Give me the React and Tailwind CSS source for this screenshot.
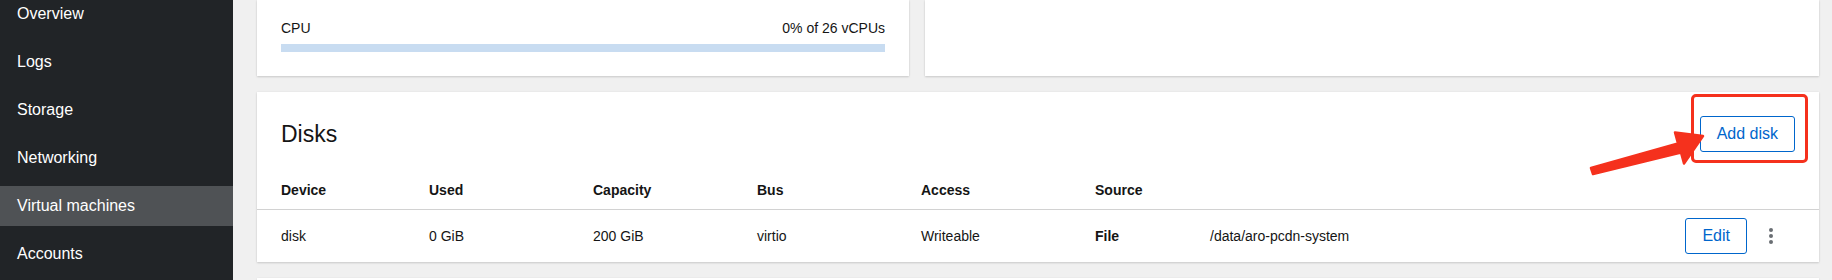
import React from "react";

const navItems = ["Overview", "Logs", "Storage", "Networking", "Virtual machines", "Accounts"];

const columns = [
  { label: "Device", w: "w-[148px]" },
  { label: "Used", w: "w-[164px]" },
  { label: "Capacity", w: "w-[164px]" },
  { label: "Bus", w: "w-[164px]" },
  { label: "Access", w: "w-[174px]" },
  { label: "Source", w: "w-[115px]" },
];

const disk = ["disk", "0 GiB", "200 GiB", "virtio", "Writeable"];

function Kebab() {
  return (
    <svg width="4" height="16" viewBox="0 0 4 16" fill="#6a6e73">
      <circle cx="2" cy="2" r="2" />
      <circle cx="2" cy="8" r="2" />
      <circle cx="2" cy="14" r="2" />
    </svg>
  );
}

export default function App() {
  return (
    <div className="relative flex h-[280px] w-[1832px] overflow-hidden font-['Liberation_Sans',Arial,sans-serif] text-[#151515]">
      {/* Sidebar */}
      <nav className="w-[233px] shrink-0 bg-[#212427]">
        <ul className="-mt-[6px] flex flex-col gap-2">
          {navItems.map((item) => (
            <li
              key={item}
              className={
                "flex h-10 items-center pl-[17px] text-base text-white " +
                (item === "Virtual machines" ? "bg-[#4f5255]" : "")
              }
            >
              {item}
            </li>
          ))}
        </ul>
      </nav>

      {/* Main */}
      <main className="flex flex-1 flex-col gap-4 bg-[#f0f0f0] pl-6 pr-[13px]">
        <div className="flex gap-4">
          <div className="w-[652px] bg-white px-6 pt-[18px] pb-6 shadow-[0_1px_2px_rgba(3,3,3,0.15),0_0_2px_rgba(3,3,3,0.06)]">
            <div className="flex justify-between text-sm leading-[21px]">
              <span>CPU</span>
              <span>0% of 26 vCPUs</span>
            </div>
            <div className="mt-[5px] h-2 bg-[#c8dcf1]" />
          </div>
          <div className="flex-1 bg-white shadow-[0_1px_2px_rgba(3,3,3,0.15),0_0_2px_rgba(3,3,3,0.06)]" />
        </div>

        {/* Disks card */}
        <div className="bg-white shadow-[0_1px_2px_rgba(3,3,3,0.15),0_0_2px_rgba(3,3,3,0.06)]">
          <div className="flex items-center justify-between px-6 pt-6">
            <h2 className="text-[23px] leading-none">Disks</h2>
            <div className="relative">
              <div className="pointer-events-none absolute -top-[22px] -left-[9px] -right-[13px] -bottom-[11px] rounded-[5px] border-[3px] border-[#f5311d]" />
              <button className="h-9 rounded-[3px] border border-[#0066cc] px-4 text-base text-[#0066cc]">
                Add disk
              </button>
            </div>
          </div>

          <div className="flex border-b border-[#d2d2d2] px-6 pt-[28px] pb-2 text-sm leading-[21px] font-bold">
            {columns.map((c) => (
              <div key={c.label} className={c.w}>{c.label}</div>
            ))}
          </div>

          <div className="flex h-[52px] items-center pl-6 pr-8 text-sm">
            {disk.map((v, i) => (
              <div key={i} className={columns[i].w}>{v}</div>
            ))}
            <div className={columns[5].w + " font-bold"}>File</div>
            <div className="flex-1">/data/aro-pcdn-system</div>
            <button className="h-9 rounded-[3px] border border-[#0066cc] px-4 text-base text-[#0066cc]">
              Edit
            </button>
            <button className="ml-2 flex h-9 w-8 items-center justify-center">
              <Kebab />
            </button>
          </div>
        </div>

        <div className="h-20 bg-white shadow-[0_1px_2px_rgba(3,3,3,0.15),0_0_2px_rgba(3,3,3,0.06)]" />
      </main>

      {/* annotation arrow */}
      <svg
        className="pointer-events-none absolute left-[1580px] top-[120px]"
        width="130"
        height="60"
        viewBox="0 0 130 60"
      >
        <polygon
          points="11,48 98,23.5 95,12.5 123,16 104,43.5 101,32.5 13,54"
          fill="#f5311d"
          stroke="#f5311d"
          strokeWidth="2.5"
          strokeLinejoin="round"
        />
      </svg>
    </div>
  );
}
